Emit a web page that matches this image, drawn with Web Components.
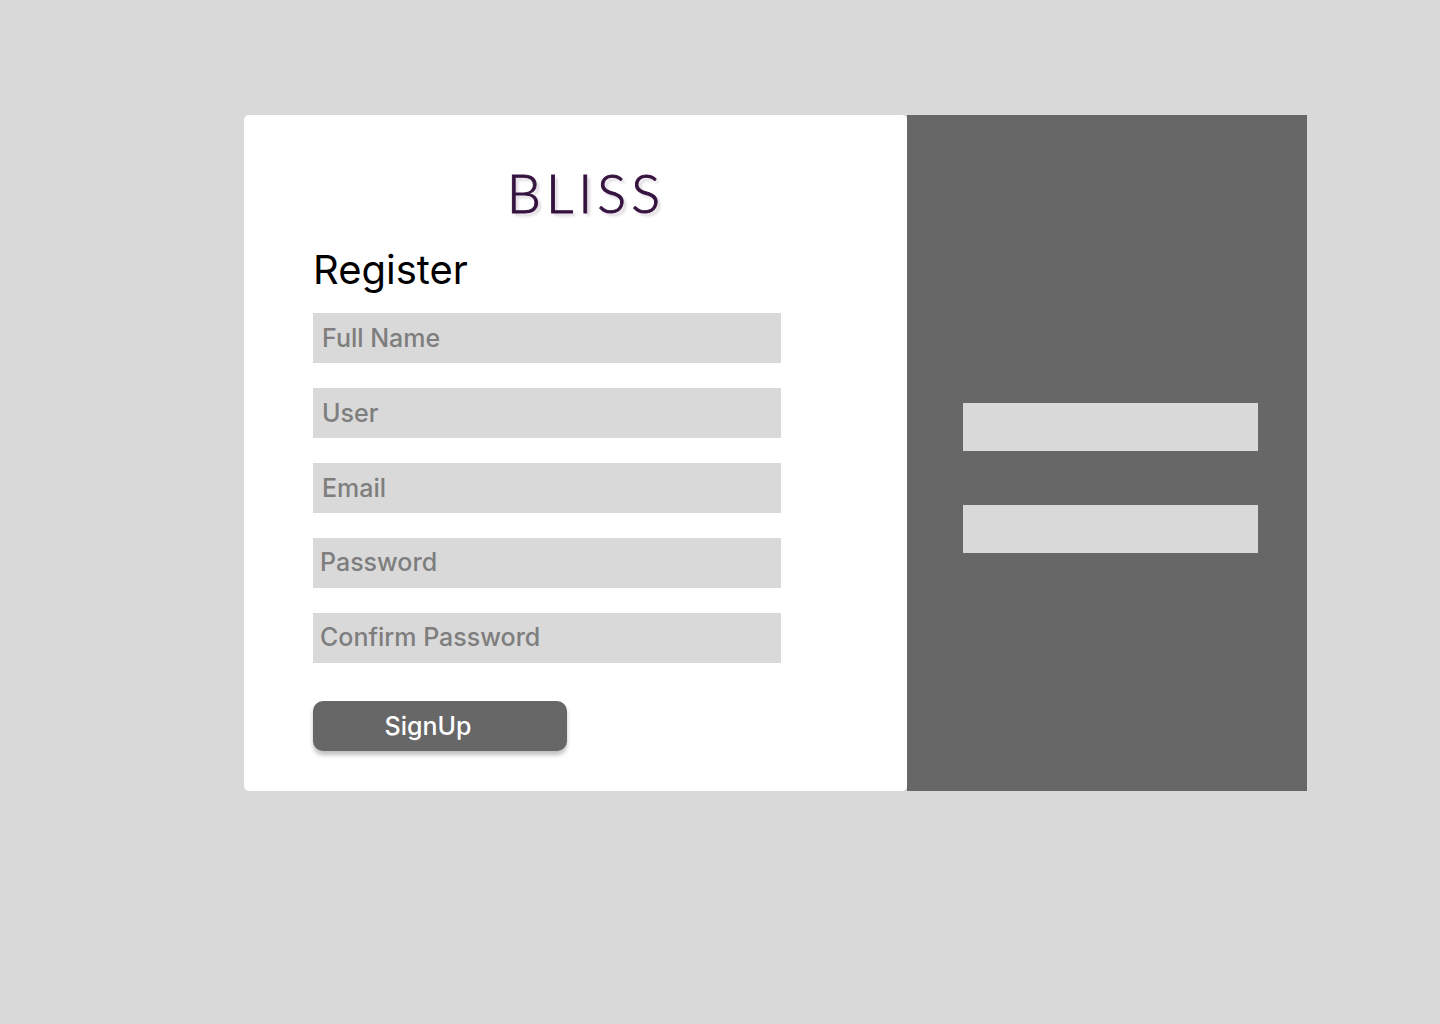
<!DOCTYPE html>
<html lang="en">
<head>
<meta charset="utf-8">
<meta name="viewport" content="width=device-width, initial-scale=1">
<title>Bliss – Register</title>
<style>
  body { margin: 0; background: #d9d9d9; font-family: Inter, "Liberation Sans", sans-serif; }
</style>
</head>
<body>
<register-page>
  <register-form>
    <bliss-logo>BLISS</bliss-logo>
    <text-field label="Full Name" name="fullname"></text-field>
    <text-field label="User" name="user"></text-field>
    <text-field label="Email" name="email" type="email"></text-field>
    <text-field label="Password" name="password" type="password"></text-field>
    <text-field label="Confirm Password" name="confirm" type="password"></text-field>
    <submit-button slot="action">SignUp</submit-button>
  </register-form>
  <side-panel slot="side"></side-panel>
</register-page>
<script>
  const define = (name, html, setup) => customElements.define(name, class extends HTMLElement {
    constructor() {
      super();
      this.attachShadow({ mode: 'open' }).innerHTML = html;
    }
    connectedCallback() {
      if (setup) setup(this, this.shadowRoot);
    }
  });

  define('register-page', `
    <style>
      :host { display: block; box-sizing: border-box; min-height: 100vh; padding: 115px 133px 115px 244px; }
      main { display: flex; align-items: stretch; }
      ::slotted(register-form) { flex: 1; }
      ::slotted(side-panel) { flex: 0 0 400px; }
    </style>
    <main><slot></slot><slot name="side"></slot></main>`);

  define('register-form', `
    <style>
      :host { display: block; background: #fff; border-radius: 5px; }
      form { display: flex; flex-direction: column; padding: 43px 126px 40px 69px; }
      .fields { display: flex; flex-direction: column; gap: 25px; }
      h1 { margin: 18px 0 19px; font-size: 40px; line-height: 48px; font-weight: 400; color: #000; }
      .action { margin-top: 38px; }
      .brand { display: flex; justify-content: center; padding-left: 78px; }
    </style>
    <form>
      <div class="brand"><slot name="brand"></slot></div>
      <h1>Register</h1>
      <div class="fields"><slot></slot></div>
      <div class="action"><slot name="action"></slot></div>
    </form>`, host => {
      host.querySelector('bliss-logo')?.setAttribute('slot', 'brand');
    });

  define('bliss-logo', `
    <style>
      :host { display: block; font: 300 54px/70px Lato, sans-serif; letter-spacing: 5px;
              color: #35123f; -webkit-text-stroke: 1px #35123f;
              text-shadow: 3px 3px 3px rgba(53, 18, 63, .2); }
    </style>
    <slot></slot>`);

  define('text-field', `
    <style>
      :host { display: block; }
      input { display: block; box-sizing: border-box; width: 100%; height: 50px; margin: 0; padding: 0 9px;
              border: 0; border-radius: 0; background: #d9d9d9; color: #333;
              font: 500 25px/36px Inter, "Liberation Sans", sans-serif; }
      input[type=password] { padding: 0 7px 2px; }
      input::placeholder { color: #7e7e7e; opacity: 1; }
    </style>
    <input>`, (host, root) => {
      const input = root.querySelector('input');
      input.type = host.getAttribute('type') || 'text';
      input.name = host.getAttribute('name');
      input.placeholder = host.getAttribute('label');
      input.setAttribute('aria-label', host.getAttribute('label'));
    });

  define('submit-button', `
    <style>
      :host { display: block; }
      button { display: block; box-sizing: border-box; width: 254px; height: 50px; margin: 0; padding: 0 24px 0 0;
               border: 0; border-radius: 10px; background: #676767; color: #fff; cursor: pointer;
               font: 500 25px/36px Inter, "Liberation Sans", sans-serif; box-shadow: 0 4px 4px rgba(0, 0, 0, .25); }
    </style>
    <button type="button"><slot></slot></button>`);

  define('side-panel', `
    <style>
      :host { display: block; background: #676767; }
      nav { display: flex; flex-direction: column; gap: 54px; padding: 288px 49px 0 56px; }
      button { height: 48px; margin: 0; padding: 0; border: 0; border-radius: 0; background: #d9d9d9; cursor: pointer; }
    </style>
    <nav aria-label="Account">
      <button type="button" aria-label="Log in"></button>
      <button type="button" aria-label="Help"></button>
    </nav>`);
</script>
</body>
</html>
